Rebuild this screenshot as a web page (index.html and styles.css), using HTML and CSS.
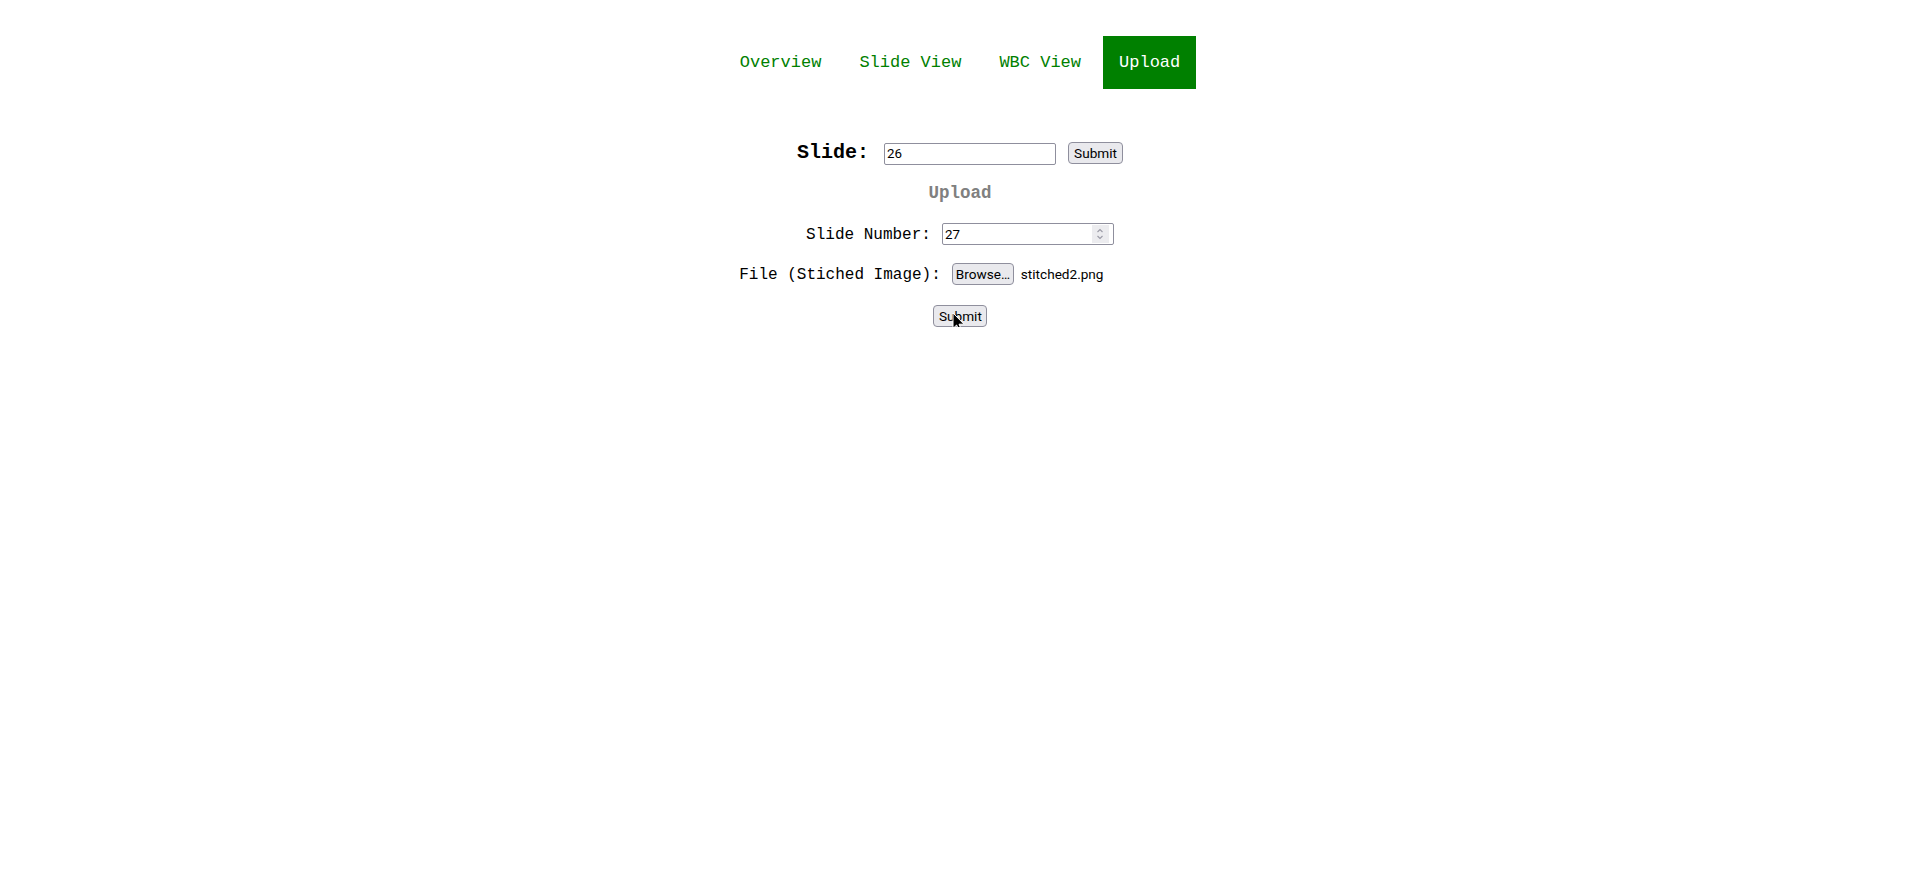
FILE: index.html
```html
<!DOCTYPE html>
<html lang="en">
<head>
<meta charset="utf-8">
<title>Upload</title>
<link rel="stylesheet" href="styles.css">
</head>
<body>
<nav class="nav">
  <ul class="nav-list">
    <li><a class="nav-link" href="#">Overview</a></li>
    <li><a class="nav-link" href="#">Slide View</a></li>
    <li><a class="nav-link" href="#">WBC View</a></li>
    <li><a class="nav-link active" href="#">Upload</a></li>
  </ul>
</nav>
<main class="main">
  <form class="row slide-row">
    <label class="slide-label" for="slide">Slide:</label>
    <input class="text-input slide-input" id="slide" type="text" value="26">
    <button class="btn" type="button">Submit</button>
  </form>
  <h2 class="section-title">Upload</h2>
  <div class="row num-row">
    <label class="field-label" for="num">Slide Number:</label>
    <span class="num-box">
      <input class="num-input" id="num" type="text" value="27">
      <span class="spin">
        <svg width="10" height="14" viewBox="0 0 10 14" aria-hidden="true">
          <path d="M2.5 5 L5 2.5 L7.5 5" fill="none" stroke="#9a9aa6" stroke-width="1.1"/>
          <path d="M2.5 9 L5 11.5 L7.5 9" fill="none" stroke="#9a9aa6" stroke-width="1.1"/>
        </svg>
      </span>
    </span>
  </div>
  <div class="row file-row">
    <label class="field-label">File (Stiched Image):</label>
    <span class="file-box">
      <button class="btn browse-btn" type="button">Browse…</button>
      <span class="file-name">stitched2.png</span>
    </span>
  </div>
  <div class="row submit-row">
    <button class="btn submit-btn" type="button">Submit</button>
    <svg class="cursor" width="13" height="21" viewBox="0 0 13 21" aria-hidden="true">
      <path d="M1 1 L1 16.5 L4.6 13 L7.2 19 L9.6 18 L7 12.2 L12 12.2 Z" fill="#000" stroke="#fff" stroke-width="1" stroke-linejoin="round"/>
    </svg>
  </div>
</main>
</body>
</html>
```
FILE: styles.css
```css
html, body {
  margin: 0;
  padding: 0;
  background: #fff;
}
body {
  font-family: "Liberation Mono", "DejaVu Sans Mono", monospace;
  color: #000;
}
.nav {
  padding-top: 36px;
}
.nav-list {
  list-style: none;
  margin: 0;
  padding: 0;
  display: flex;
  justify-content: center;
  gap: 6px;
}
.nav-link {
  display: block;
  padding: 16px;
  font-size: 17px;
  line-height: 21px;
  color: #008000;
  text-decoration: none;
}
.nav-link.active {
  background: #008000;
  color: #fff;
}
.main {
  display: flex;
  flex-direction: column;
  align-items: center;
  margin-top: 52px;
}
.row {
  display: flex;
  align-items: baseline;
  justify-content: center;
  height: 22px;
  margin: 0;
}
.slide-label {
  font-weight: bold;
  font-size: 20px;
  margin-right: 15px;
}
.text-input,
.num-box {
  box-sizing: border-box;
  height: 22px;
  border: 1px solid #8f8f9d;
  border-radius: 2px;
  background: #fff;
  font-family: "Roboto", "Noto Sans", sans-serif;
  font-size: 13.33px;
  color: #000;
}
.text-input {
  padding: 0 2px;
  outline: none;
}
.slide-input {
  width: 172px;
  margin-right: 12px;
}
.btn {
  box-sizing: border-box;
  height: 22px;
  padding: 0 5px;
  border: 1px solid #8f8f9d;
  border-radius: 4px;
  background: #e9e9ed;
  font-family: "Roboto", "Noto Sans", sans-serif;
  font-size: 13.6px;
  color: #000;
}
.section-title {
  margin: 20px 0 0;
  height: 20px;
  line-height: 20px;
  font-size: 17.5px;
  font-weight: bold;
  color: #808080;
}
.num-row {
  margin-top: 20px;
}
.field-label {
  font-size: 16px;
  margin-right: 11px;
}
.num-box {
  display: flex;
  align-items: center;
  width: 172px;
  padding: 0 4px 0 2px;
}
.num-input {
  flex: 1;
  min-width: 0;
  border: none;
  outline: none;
  padding: 0;
  font: inherit;
  background: transparent;
}
.spin {
  display: flex;
  align-items: center;
  justify-content: center;
  width: 17px;
  height: 18px;
  background: #ececef;
}
.file-row {
  margin-top: 18px;
}
.file-box {
  display: flex;
  align-items: baseline;
  width: 229px;
  gap: 7px;
}
.browse-btn {
  width: 62px;
  padding: 0 3px;
}
.file-name {
  font-family: "Roboto", "Noto Sans", sans-serif;
  font-size: 13.6px;
}
.submit-row {
  margin-top: 20px;
  position: relative;
}
.submit-btn {
  width: 54px;
}
.cursor {
  position: absolute;
  left: 19px;
  top: 7px;
}
```
